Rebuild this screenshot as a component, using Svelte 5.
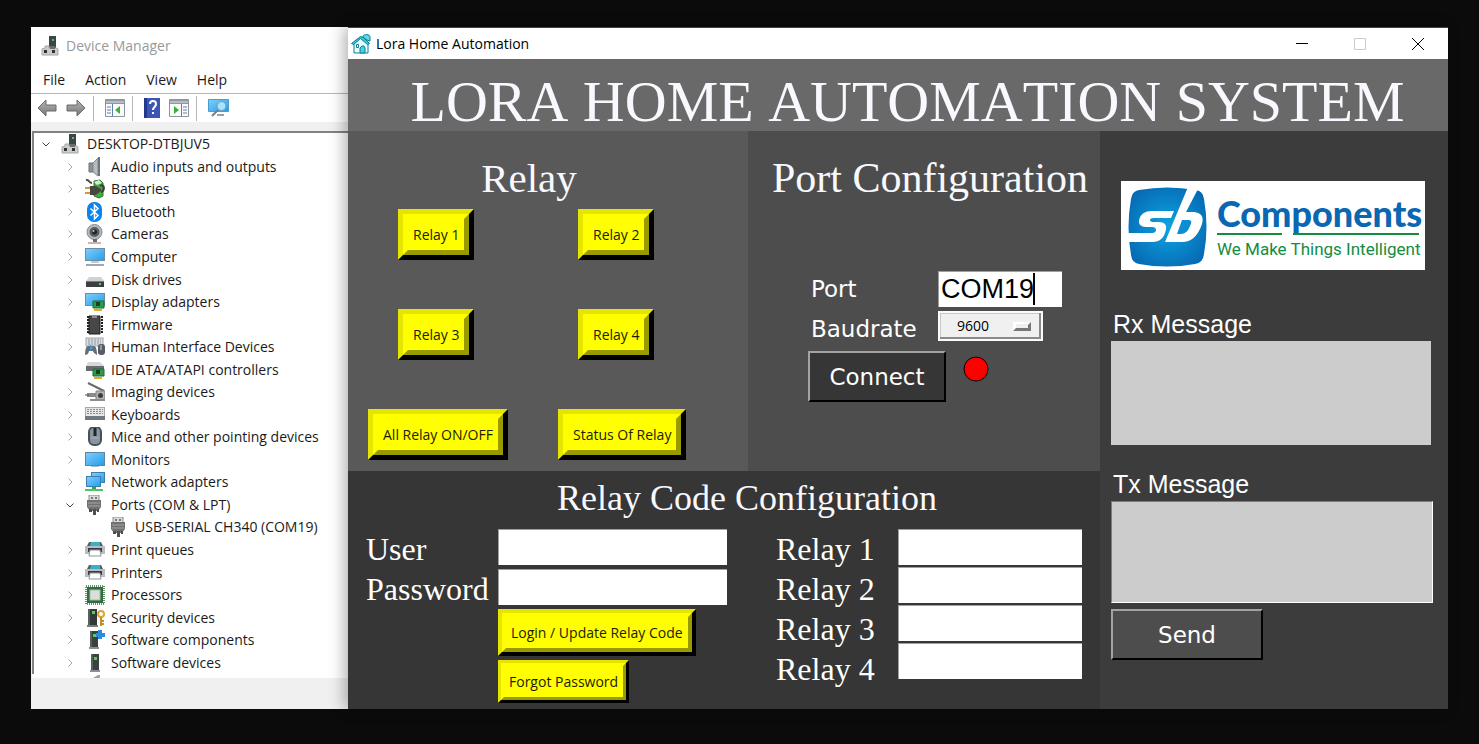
<script>
  const tree = [
    { label: 'DESKTOP-DTBJUV5', icon: 'pc', level: 0, open: true },
    { label: 'Audio inputs and outputs', icon: 'audio', level: 1 },
    { label: 'Batteries', icon: 'battery', level: 1 },
    { label: 'Bluetooth', icon: 'bluetooth', level: 1 },
    { label: 'Cameras', icon: 'camera', level: 1 },
    { label: 'Computer', icon: 'computer', level: 1 },
    { label: 'Disk drives', icon: 'disk', level: 1 },
    { label: 'Display adapters', icon: 'display', level: 1 },
    { label: 'Firmware', icon: 'firmware', level: 1 },
    { label: 'Human Interface Devices', icon: 'hid', level: 1 },
    { label: 'IDE ATA/ATAPI controllers', icon: 'ide', level: 1 },
    { label: 'Imaging devices', icon: 'imaging', level: 1 },
    { label: 'Keyboards', icon: 'keyboard', level: 1 },
    { label: 'Mice and other pointing devices', icon: 'mouse', level: 1 },
    { label: 'Monitors', icon: 'monitor', level: 1 },
    { label: 'Network adapters', icon: 'network', level: 1 },
    { label: 'Ports (COM & LPT)', icon: 'port', level: 1, open: true },
    { label: 'USB-SERIAL CH340 (COM19)', icon: 'port', level: 2, leaf: true },
    { label: 'Print queues', icon: 'printer', level: 1 },
    { label: 'Printers', icon: 'printer', level: 1 },
    { label: 'Processors', icon: 'cpu', level: 1 },
    { label: 'Security devices', icon: 'security', level: 1 },
    { label: 'Software components', icon: 'component', level: 1 },
    { label: 'Software devices', icon: 'tower', level: 1 }
  ];
  const menus = ['File', 'Action', 'View', 'Help'];
  const relays = [1, 2, 3, 4];

  let port = $state('COM19');
  let baud = $state('9600');
  let user = $state('');
  let password = $state('');
  let tx = $state('');
  let codes = $state(['', '', '', '']);
</script>

{#snippet screen()}
  <rect x="0.5" y="1.5" width="19" height="12" fill="url(#screen)" stroke="#6f8da3" />
{/snippet}

{#snippet towerShape()}
  <path d="M5 1h8v16H5z" fill="#3b4040" />
  <path d="M5 1h2v16H5z" fill="#596060" />
  <path d="M4 17h10v2H4z" fill="#8b8f8f" />
  <path d="M8 4h3v3H8z" fill="#43d94b" />
{/snippet}

{#snippet chipCard()}
  <path d="M8 9h11v7H8z" fill="#2f9a4a" stroke="#1d6b31" />
  <path d="M11 10h4v4h-4z" fill="#15441f" />
  <path d="M9 17h8v2H9z" fill="#e8a924" />
{/snippet}

{#snippet icon(name)}
  <svg class="ico" viewBox="0 0 20 20" aria-hidden="true">
    {#if name === 'pc'}
      <path d="M8 0h7v12H8z" fill="#3c4643" />
      <path d="M11 3h2v2h-2z" fill="#4fc35a" />
      <path d="M4 10h4v2h7l2 1v6H1v-6l3-1z" fill="#c9cbcd" stroke="#a4a6a8" />
      <path d="M9 10h5v3H9z" fill="#6a6e6c" />
      <path d="M3 14h3v3H3zM11 14h3v3h-3z" fill="#2f3133" />
    {:else if name === 'audio'}
      <path d="M4 6h4v9H4z" fill="#8d9298" stroke="#6d7278" />
      <path d="M8 6l5-5v18l-5-4z" fill="#b9bdc1" stroke="#85898d" />
      <path d="M13 0h2v19h-2z" fill="#6f747a" />
    {:else if name === 'battery'}
      <path d="M9 2l6-1 3 3v13l-4 2-5-2z" fill="#3fae3b" stroke="#2b7829" />
      <path d="M9 3l5-2 3 3-5 2z" fill="#d6ead6" />
      <path d="M1 1c3-1 3 3 6 3" fill="none" stroke="#5a4a44" stroke-width="2" />
      <path d="M15 7c5-3 5 5 1 6" fill="none" stroke="#3c3c3c" stroke-width="2" />
      <path d="M5 7h6l5 3v2l-5 4H5z" fill="#4a4742" />
      <path d="M0 9h5M0 14h5" stroke="#c99b45" stroke-width="2" />
    {:else if name === 'bluetooth'}
      <rect x="2" y="0" width="15" height="20" rx="7" fill="#0a84f0" />
      <path d="M5.500 6.500l7.500 7L9.500 17V3L13 6.500l-7.500 7" fill="none" stroke="#fff" stroke-width="1.500" />
    {:else if name === 'camera'}
      <circle cx="9.500" cy="8" r="7.500" fill="#b7babd" stroke="#86898c" />
      <circle cx="9.500" cy="8" r="5" fill="#575d63" />
      <circle cx="9.500" cy="8" r="2.500" fill="#20262c" />
      <circle cx="8.500" cy="7" r="1" fill="#b8c8d8" />
      <path d="M8 15h4v3H8z" fill="#6b6b6b" />
      <path d="M3 19h13" stroke="#b49d94" stroke-width="1.500" />
    {:else if name === 'computer'}
      {@render screen()}
      <path d="M6 14h8v2H6z" fill="#c2cdd5" />
      <path d="M1 18h18" stroke="#9aa9b5" stroke-width="2" />
    {:else if name === 'disk'}
      <path d="M4 7h12l3 4H1z" fill="#d0d2d3" />
      <path d="M1 11h18v6H1z" fill="#3c3f41" />
      <path d="M1 11h18v1H1z" fill="#77797b" />
      <path d="M14 13h2v2h-2z" fill="#55d35b" />
    {:else if name === 'display'}
      {@render screen()}
      {@render chipCard()}
    {:else if name === 'firmware'}
      <path d="M4 1h11v18H4z" fill="#474747" stroke="#1f1f1f" />
      <path d="M3 1v18M17 1v18" stroke="#1f1f1f" stroke-width="2" stroke-dasharray="2 1" />
      <path d="M7 1h5v2H7z" fill="#8c8c8c" />
    {:else if name === 'hid'}
      <rect x="1" y="1" width="17" height="8" fill="#dde0e2" stroke="#9fa4a8" />
      <path d="M3 3h13M3 5h13M3 7h13" stroke="#8e9397" stroke-dasharray="2 1" />
      <path d="M0 18c0-5 1-9 3-9h6c2 0 3 4 3 9l-3-2-1-2H4l-1 3z" fill="#686e76" />
      <path d="M5 7l3 4-3 3z" fill="#3c9be0" />
      <rect x="13" y="7" width="7" height="11" rx="3" fill="#555d66" />
      <path d="M16 8v5" stroke="#d3d9de" />
    {:else if name === 'ide'}
      <path d="M3 2h12l4 4H1z" fill="#d7d8d9" />
      <path d="M1 6h18v5H1z" fill="#6a6d70" />
      {@render chipCard()}
    {:else if name === 'imaging'}
      <path d="M3 1l16 8" stroke="#6a6a6a" stroke-width="2" />
      <path d="M2 11h9v4H2z" fill="#8a8a8a" />
      <path d="M0 13h4" stroke="#555" />
      <path d="M11 9h9v9h-9z" fill="#b3b3b3" stroke="#858585" />
      <circle cx="15.500" cy="13.500" r="2.500" fill="#3d3d3d" />
      <path d="M5 18h15" stroke="#8d8d8d" stroke-width="2" />
    {:else if name === 'keyboard'}
      <rect x="0.500" y="2.500" width="19" height="10" fill="#e6e8ea" stroke="#a5aaae" />
      <path d="M2 4.500h16M2 6.500h16M2 8.500h16" stroke="#868b90" stroke-dasharray="2 1" />
      <path d="M0 11h20v4H0z" fill="#717980" />
    {:else if name === 'mouse'}
      <rect x="4" y="0" width="12" height="18" rx="5" fill="#8a95a2" stroke="#4a5159" stroke-width="2" />
      <path d="M10 1v8" stroke="#20262c" stroke-width="3" />
      <path d="M6 11h8" stroke="#a9b4c0" />
    {:else if name === 'monitor'}
      <rect x="0.500" y="2.500" width="19" height="13" fill="url(#screen)" stroke="#5d86a5" />
      <path d="M6 16h8v1H6z" fill="#aebbc5" />
    {:else if name === 'network'}
      <rect x="6.500" y="0.500" width="13" height="10" fill="url(#screen)" stroke="#3c7eb0" />
      <rect x="1.500" y="4.500" width="14" height="10" fill="url(#screen)" stroke="#3c7eb0" />
      <path d="M7 15h4v2H7z" fill="#2ea44d" />
      <path d="M0 18h18" stroke="#53c45f" stroke-width="2" />
    {:else if name === 'port'}
      <path d="M4 0h10v6H4z" fill="#d9dbdc" stroke="#8a8c8e" />
      <path d="M6 2h2v2H6zM10 2h2v2h-2z" fill="#77797b" />
      <path d="M2 5h14v7l-3 4H5l-3-4z" fill="#6f7173" />
      <path d="M3 8h12M3 11h12" stroke="#a4a6a8" />
      <path d="M4 14h3v3H4zM8 14h3v6H8zM12 14h2v3h-2z" fill="#4d4f51" />
    {:else if name === 'printer'}
      <path d="M4 2h12l2 4H2z" fill="#5a5d60" />
      <path d="M6 2h9v4H5z" fill="#39b0c9" />
      <path d="M0 6h20v8H0z" fill="#b9bcbf" />
      <path d="M3 8h14v4H3z" fill="#3a3d40" />
      <path d="M5 10h10l1 6H4z" fill="#fff" stroke="#8f9396" />
    {:else if name === 'cpu'}
      <rect x="1" y="1" width="18" height="18" fill="none" stroke="#62906a" stroke-width="2" stroke-dasharray="1 1" />
      <rect x="2" y="2" width="16" height="16" fill="#2f6e3c" />
      <rect x="5" y="5" width="10" height="10" fill="#d9dedb" stroke="#a9b6ac" />
    {:else if name === 'security'}
      <path d="M3 1h9v16H3z" fill="#333838" />
      <path d="M3 1h2v16H3z" fill="#596060" />
      <path d="M2 17h11v2H2z" fill="#777b7b" />
      <path d="M7 3h3v3H7z" fill="#43d94b" />
      <circle cx="16" cy="6" r="3" fill="none" stroke="#dba537" stroke-width="2" />
      <path d="M16 9v9M16 13h3M16 16h3" stroke="#c88e21" stroke-width="2" />
    {:else if name === 'component'}
      {@render towerShape()}
      <path d="M13 0h4v3h3v4h-3v2h-4V7h-2V3h2z" fill="#2b8be0" />
    {:else if name === 'tower'}
      <g transform="translate(1 0)">{@render towerShape()}</g>
    {/if}
  </svg>
{/snippet}

<svg class="defs" width="0" height="0" aria-hidden="true">
  <defs>
    <linearGradient id="screen" x1="0" y1="0" x2="1" y2="1">
      <stop offset="0" stop-color="#7fd0fb" />
      <stop offset="1" stop-color="#279bea" />
    </linearGradient>
    <linearGradient id="arrow" x1="0" y1="0" x2="0" y2="1">
      <stop offset="0" stop-color="#b5b5b5" />
      <stop offset="1" stop-color="#767676" />
    </linearGradient>
    <radialGradient id="brand" cx="0.5" cy="0.5" r="0.65">
      <stop offset="0" stop-color="#0ea4e0" />
      <stop offset="1" stop-color="#0564b0" />
    </radialGradient>
  </defs>
</svg>

<main class="desktop">
  <section class="manager">
    <header class="dm-title">
      {@render icon('pc')}
      <span>Device Manager</span>
    </header>
    <nav class="menu">
      {#each menus as item}
        <button type="button">{item}</button>
      {/each}
    </nav>
    <div class="toolbar">
      <button type="button" aria-label="Back">
        <svg width="20" height="20" viewBox="0 0 20 20"><path d="M1 10l8-8v5h10v6H9v5z" fill="url(#arrow)" stroke="#6b6b6b" /></svg>
      </button>
      <button type="button" aria-label="Forward">
        <svg width="20" height="20" viewBox="0 0 20 20"><path d="M19 10l-8-8v5H1v6h10v5z" fill="url(#arrow)" stroke="#6b6b6b" /></svg>
      </button>
      <i></i>
      <button type="button" aria-label="Show console tree">
        <svg width="20" height="18" viewBox="0 0 20 18">
          <path d="M.5.500h19v17H.5z" fill="#fafafa" stroke="#8c939b" />
          <path d="M1 1h18v4H1z" fill="#8f98a3" /><path d="M1 3h18" stroke="#dfe3e8" />
          <path d="M7.500 5v12M2 8h4M2 11h4M2 14h4" stroke="#5d7fae" />
          <path d="M15 7v8l-5-4z" fill="#3fae3b" />
        </svg>
      </button>
      <i></i>
      <button type="button" aria-label="Help topics">
        <svg width="16" height="20" viewBox="0 0 16 20">
          <path d="M0 0h16v20H0z" fill="#3d55b5" /><path d="M0 0h3v20H0z" fill="#24388c" />
          <path d="M6 6c0-4 6-4 6 0 0 3-3 3-3 6" fill="none" stroke="#fff" stroke-width="2" />
          <path d="M8 14h2v2H8z" fill="#fff" />
        </svg>
      </button>
      <button type="button" aria-label="Show action pane">
        <svg width="20" height="18" viewBox="0 0 20 18">
          <path d="M.5.500h19v17H.5z" fill="#fafafa" stroke="#8c939b" />
          <path d="M1 1h18v4H1z" fill="#8f98a3" /><path d="M1 3h18" stroke="#dfe3e8" />
          <path d="M12.500 5v12M14 8h4M14 11h4M14 14h4" stroke="#5d7fae" />
          <path d="M5 7v8l5-4z" fill="#3fae3b" />
        </svg>
      </button>
      <i></i>
      <button type="button" aria-label="Scan for hardware changes">
        <svg width="21" height="20" viewBox="0 0 21 20">
          <path d="M.5 1.500h20v12H.5z" fill="url(#screen)" stroke="#4b9fd0" />
          <path d="M9 16h7v2H9z" fill="#8fa4b3" />
          <circle cx="13.500" cy="8" r="4.500" fill="#a9e0fb" stroke="#6c9cba" />
          <path d="M10 12l-6 6" stroke="#73808a" stroke-width="2" />
        </svg>
      </button>
    </div>
    <div class="tree">
      <ul>
        {#each tree as node}
          <li class="level{node.level}">
            {#if !node.leaf}
              <svg class="chev" class:open={node.open} viewBox="0 0 8 8" aria-hidden="true">
                <path d={node.open ? 'M0.500 2.500L4 6l3.500-3.500' : 'M2.500 0.500L6 4 2.500 7.500'} />
              </svg>
            {/if}
            {@render icon(node.icon)}
            <span>{node.label}</span>
          </li>
        {/each}
      </ul>
      <svg class="clipped" viewBox="0 0 20 4" aria-hidden="true"><path d="M8 4l5-3h2v3z" fill="#a2a2a2" /></svg>
    </div>
  </section>

  <section class="lora">
    <header class="titlebar">
      <svg width="20" height="20" viewBox="0 0 20 20" aria-hidden="true">
        <path d="M3 9l7-6 7 6v10H3z" fill="#e8fbfd" stroke="#0e7f95" />
        <path d="M12 2c1-2 7-2 7 1v4l-3-1-4-3z" fill="#5fdbe8" stroke="#0e7f95" />
        <path d="M0.500 9.500l9-7 3 1 6 6-2 1-7-6-7 6z" fill="#35c6d8" stroke="#0e7f95" />
        <path d="M9 19v-5l2-2h2l1 2v5z" fill="#3fd5e5" stroke="#0e7f95" />
        <path d="M5.500 10.500h2v3h-2z" fill="#fff" stroke="#0e7f95" />
      </svg>
      <span>Lora Home Automation</span>
      <div class="controls">
        <button type="button" aria-label="Minimize"><svg width="12" height="12" viewBox="0 0 12 12"><path d="M0 5.500h12" stroke="#000" /></svg></button>
        <button type="button" aria-label="Maximize" disabled><svg width="12" height="12" viewBox="0 0 12 12"><path d="M.5.500h11v11H.5z" fill="none" stroke="#ccc" /></svg></button>
        <button type="button" aria-label="Close"><svg width="12" height="12" viewBox="0 0 12 12"><path d="M0 0l12 12M12 0L0 12" stroke="#000" /></svg></button>
      </div>
    </header>
    <h1>LORA HOME AUTOMATION SYSTEM</h1>

    <div class="panels">
      <section class="relay">
        <h2>Relay</h2>
        <div class="pair">
          <button type="button" class="yellow"><span>Relay 1</span></button>
          <button type="button" class="yellow"><span>Relay 2</span></button>
        </div>
        <div class="pair">
          <button type="button" class="yellow"><span>Relay 3</span></button>
          <button type="button" class="yellow"><span>Relay 4</span></button>
        </div>
        <div class="pair wide">
          <button type="button" class="yellow"><span>All Relay ON/OFF</span></button>
          <button type="button" class="yellow"><span>Status Of Relay</span></button>
        </div>
      </section>

      <section class="portcfg">
        <h2>Port Configuration</h2>
        <div class="portform">
          <label for="port">Port</label>
          <div class="portbox">
            <input id="port" type="text" bind:value={port} />
            <span class="caret"></span>
          </div>
          <label for="baud">Baudrate</label>
          <div class="baudbox">
            <select id="baud" bind:value={baud}>
              <option>9600</option>
            </select>
            <svg class="knob" width="18" height="9" viewBox="0 0 18 9" aria-hidden="true">
              <path d="M0 0h18l-3 2v4H3L0 9z" fill="#fff" />
              <path d="M18 0v9H0l3-3h12V3z" fill="#777" />
              <path d="M3 2h12v4H3z" fill="#f0f0f0" />
            </svg>
          </div>
        </div>
        <div class="connect">
          <button type="button" class="dark">Connect</button>
          <svg width="26" height="26" viewBox="0 0 26 26" aria-hidden="true"><circle cx="13" cy="13" r="12" fill="#f00" stroke="#000" /></svg>
        </div>
      </section>

      <section class="messages">
        <div class="logo">
          <svg width="79" height="80" viewBox="0 0 79 80" aria-hidden="true">
            <path d="M11 3Q39-2 68 3Q75 4 76 12Q81 40 76 67Q75 76 67 77Q39 82 11 77Q4 76 3 68Q-2 40 3 12Q4 4 11 3z" fill="url(#brand)" />
            <g fill="#fff">
              <path d="M0 46H24Q28 46 28 43Q28 40 24 40H18Q10 40 11 33Q13 24 24 24H46L43 31H26Q22 31 22 33Q22 35 26 35H31Q39 35 38 42Q36 55 24 55H0z" />
              <path d="M60 0L70 2L58 25H66Q77 26 74 37Q68 55 54 55H37z" />
            </g>
            <path d="M54 33H61Q65 33 62 39Q59 47 53 47H49z" fill="#0b8fd2" />
          </svg>
          <div class="words">
            <strong>Components</strong>
            <div class="rule"><b></b><b></b></div>
            <small>We Make Things Intelligent</small>
          </div>
        </div>
        <label for="rx">Rx Message</label>
        <textarea id="rx" class="rx" readonly></textarea>
        <label for="tx" class="second">Tx Message</label>
        <textarea id="tx" class="tx" bind:value={tx}></textarea>
        <button type="button" class="dark send">Send</button>
      </section>

      <section class="codecfg">
        <h2>Relay Code Configuration</h2>
        <div class="fields">
          <div class="labels wide">
            <label for="user">User</label>
            <label for="password">Password</label>
          </div>
          <div class="login">
            <input id="user" type="text" bind:value={user} />
            <input id="password" type="password" bind:value={password} />
            <button type="button" class="yellow b4"><span>Login / Update Relay Code</span></button>
            <button type="button" class="yellow b3"><span>Forgot Password</span></button>
          </div>
          <div class="labels">
            {#each relays as n}
              <label for="code{n}">Relay {n}</label>
            {/each}
          </div>
          <div class="codes">
            {#each relays as n, i}
              <input id="code{n}" type="text" bind:value={codes[i]} />
            {/each}
          </div>
        </div>
      </section>
    </div>
  </section>
</main>

<style>
  :global(body) {
    margin: 0;
    background: #0b0b0b;
  }
  * {
    box-sizing: border-box;
  }
  button {
    font: inherit;
    color: inherit;
    background: none;
    border: 0;
    padding: 0;
  }
  h1,
  h2 {
    margin: 0;
    font-family: 'Liberation Serif', serif;
    font-weight: 400;
    font-kerning: none;
    color: #f8f8ff;
    text-align: center;
    white-space: nowrap;
  }
  .defs {
    position: absolute;
  }
  .desktop {
    display: flex;
    min-height: 100vh;
    padding: 27px 31px 35px;
    font-family: 'Open Sans', 'Noto Sans', sans-serif;
    font-size: 14px;
    line-height: 20px;
    color: #1a1a1a;
  }

  .manager {
    flex: 0 0 317px;
    display: flex;
    flex-direction: column;
    background: #fff;
  }
  .ico {
    flex: none;
    width: 20px;
    height: 20px;
  }
  .dm-title {
    display: flex;
    align-items: center;
    gap: 5px;
    padding: 9px 10px;
    color: #999;
  }
  .menu {
    display: flex;
    gap: 20px;
    padding: 5px 12px 3px;
  }
  .menu button {
    line-height: 20px;
  }
  .toolbar {
    display: flex;
    align-items: center;
    height: 29px;
    padding: 0 6px;
    border-top: 1px solid #b4b7bb;
    gap: 6px;
  }
  .toolbar button {
    display: flex;
    margin-right: 3px;
  }
  .toolbar i {
    width: 1px;
    height: 25px;
    margin: 0 5px 0 -2px;
    background: #b5b5b5;
  }
  .tree {
    flex: 1;
    display: flex;
    flex-direction: column;
    margin-bottom: 31px;
    box-shadow: 0 31px 0 #f0f0f0;
    border-top: 9px solid #f0f0f0;
    border-left: 1px solid #f0f0f0;
  }
  .tree ul {
    flex: 1;
    display: grid;
    grid-auto-rows: 1fr;
    margin: 0;
    padding: 0;
    list-style: none;
    border-top: 2px solid #828282;
    border-left: 2px solid #828282;
  }
  .tree li {
    display: flex;
    align-items: center;
    min-height: 0;
    gap: 6px;
    white-space: nowrap;
  }
  .level0 {
    padding-left: 8px;
  }
  .level1 {
    padding-left: 32px;
  }
  .level2 {
    padding-left: 75px;
  }
  .chev {
    width: 8px;
    height: 8px;
    margin-right: 5px;
    fill: none;
    stroke: #a6a6a6;
  }
  .chev.open {
    stroke: #404040;
  }
  .clipped {
    width: 20px;
    height: 4px;
    margin-left: 53px;
  }

  .lora {
    position: relative;
    flex: 1;
    min-width: 0;
    display: flex;
    flex-direction: column;
    border-top: 1px solid #444;
    box-shadow: -4px 0 14px rgba(0, 0, 0, 0.3);
  }
  .titlebar {
    display: flex;
    align-items: center;
    gap: 5px;
    height: 31px;
    padding: 0 1px 0 3px;
    background: #fff;
    color: #000;
  }
  .controls {
    display: flex;
    margin-left: auto;
  }
  .controls button {
    display: flex;
    justify-content: center;
    width: 58px;
  }
  h1 {
    height: 72px;
    padding: 14px 0 0 19px;
    font-size: 58px;
    line-height: 58px;
    background: #696969;
  }
  h2 {
    font-size: 41px;
    line-height: 48px;
  }
  .panels {
    flex: 1;
    display: grid;
    grid-template-columns: minmax(0, 400fr) minmax(0, 352fr) minmax(0, 348fr);
    grid-template-rows: 340px 1fr;
  }
  .relay {
    background: #595959;
    padding-top: 23px;
  }
  .relay h2 {
    padding-right: 38px;
  }
  .pair {
    display: grid;
    grid-template-columns: 180px auto;
    justify-items: start;
    padding-left: 50px;
    margin: 7px 0 49px;
  }
  .pair + .pair {
    margin-top: 0;
  }
  .pair.wide {
    grid-template-columns: 190px auto;
    padding-left: 20px;
    margin-bottom: 0;
  }
  .yellow {
    display: flex;
    border: 5px solid;
    border-color: #e5e500 #000 #000 #e5e500;
    background: #ff0;
    color: #1c1c00;
    white-space: nowrap;
  }
  .yellow span {
    border: 5px solid;
    border-color: #ff0 #999900 #999900 #ff0;
    padding: 1px 5px 0;
    line-height: 30px;
  }
  .b4,
  .b4 span {
    border-width: 4px;
  }
  .b3,
  .b3 span {
    border-width: 3px;
  }

  .portcfg {
    background: #4d4d4d;
    padding-top: 23px;
    font-family: 'DejaVu Sans', sans-serif;
    font-size: 23px;
    color: #fff;
  }
  .portcfg h2 {
    padding-left: 12px;
    font-size: 42px;
  }
  .portform {
    display: grid;
    grid-template-columns: 127px auto;
    grid-auto-rows: 36px;
    gap: 4px 0;
    padding: 69px 0 4px 63px;
  }
  .portform label {
    line-height: 36px;
  }
  input {
    display: block;
    height: 36px;
    padding: 0 2px;
    border: 0;
    border-top: 1px solid #a0a0a0;
    border-left: 1px solid #a0a0a0;
    border-radius: 0;
    background: #fff;
    color: #000;
    font-family: 'Liberation Sans', sans-serif;
    font-size: 27px;
    outline: 0;
  }
  .portbox,
  .baudbox {
    position: relative;
    justify-self: start;
  }
  .portbox input {
    width: 124px;
  }
  .caret {
    position: absolute;
    left: 95px;
    top: 2px;
    width: 2px;
    height: 32px;
    background: #000;
  }
  select {
    appearance: none;
    display: block;
    width: 105px;
    height: 30px;
    padding: 0 0 0 17px;
    border: 2px solid #fbfbfb;
    border-radius: 0;
    background: #f0f0f0;
    box-shadow:
      inset -2px -2px 0 #8a8a8a,
      inset 1px 1px 0 #c8c8c8;
    color: #000;
    font: 14px/20px 'Open Sans', sans-serif;
  }
  .knob {
    position: absolute;
    right: 12px;
    top: 11px;
    pointer-events: none;
  }
  .connect {
    display: flex;
    align-items: flex-start;
    gap: 17px;
    padding-left: 60px;
  }
  .connect svg {
    margin-top: 5px;
  }
  .dark {
    width: 138px;
    height: 51px;
    border: 2px solid;
    border-color: #a3a3a3 #000 #000 #a3a3a3;
    background: #363636;
    color: #fff;
    font-family: 'DejaVu Sans', sans-serif;
    font-size: 23px;
  }

  .messages {
    grid-row: 1 / 3;
    grid-column: 3;
    display: flex;
    flex-direction: column;
    padding: 50px 15px 0 11px;
    background: #3c3c3c;
    font-family: 'Liberation Sans', sans-serif;
    font-size: 25px;
    color: #fff;
  }
  .messages label {
    padding-left: 2px;
    line-height: 30px;
    margin-bottom: 2px;
  }
  .messages .second {
    margin-top: 24px;
  }
  textarea {
    display: block;
    resize: none;
    padding: 4px;
    border: 0;
    border-radius: 0;
    background: #ccc;
    color: #000;
    font: 20px 'Liberation Sans', sans-serif;
    outline: 0;
  }
  .rx {
    height: 104px;
    margin-right: 2px;
  }
  .tx {
    height: 102px;
    border: 1px solid;
    border-color: #7d7d7d #fff #fff #7d7d7d;
  }
  .send {
    width: 152px;
    margin-top: 6px;
    background: #4d4d4d;
  }
  .logo {
    display: flex;
    gap: 10px;
    height: 89px;
    margin: 0 8px 39px 10px;
    padding: 6px 6px 0 7px;
    background: #fff;
  }
  .logo svg {
    flex: none;
  }
  .words {
    flex: 1;
    min-width: 0;
    display: flex;
    flex-direction: column;
  }
  .words strong {
    height: 46px;
    font: 900 36px/52px Lato, sans-serif;
    color: #0b67b2;
  }
  .rule {
    display: flex;
    gap: 11px;
  }
  .rule b {
    flex: 133;
    height: 2px;
    background: #148c43;
  }
  .rule b:first-child {
    flex: 68;
  }
  .words small {
    font: 17px/28px Roboto, sans-serif;
    color: #148c43;
    white-space: nowrap;
  }

  .codecfg {
    grid-column: 1 / 3;
    padding: 7px 18px 0;
    background: #363636;
  }
  .codecfg h2 {
    padding-left: 46px;
    font-size: 36px;
    line-height: 40px;
  }
  .fields {
    display: flex;
    margin-top: 11px;
  }
  .labels {
    flex: 0 0 122px;
    display: flex;
    flex-direction: column;
    font: 32px/40px 'Liberation Serif', serif;
    font-kerning: none;
    color: #fff;
    white-space: nowrap;
  }
  .labels.wide {
    flex-basis: 132px;
  }
  .login {
    display: flex;
    flex-direction: column;
    align-items: flex-start;
    gap: 4px;
    margin-right: 49px;
  }
  .login input {
    width: 229px;
  }
  .codes {
    display: flex;
    flex-direction: column;
    gap: 2px;
  }
  .codes input {
    width: 184px;
  }
</style>
